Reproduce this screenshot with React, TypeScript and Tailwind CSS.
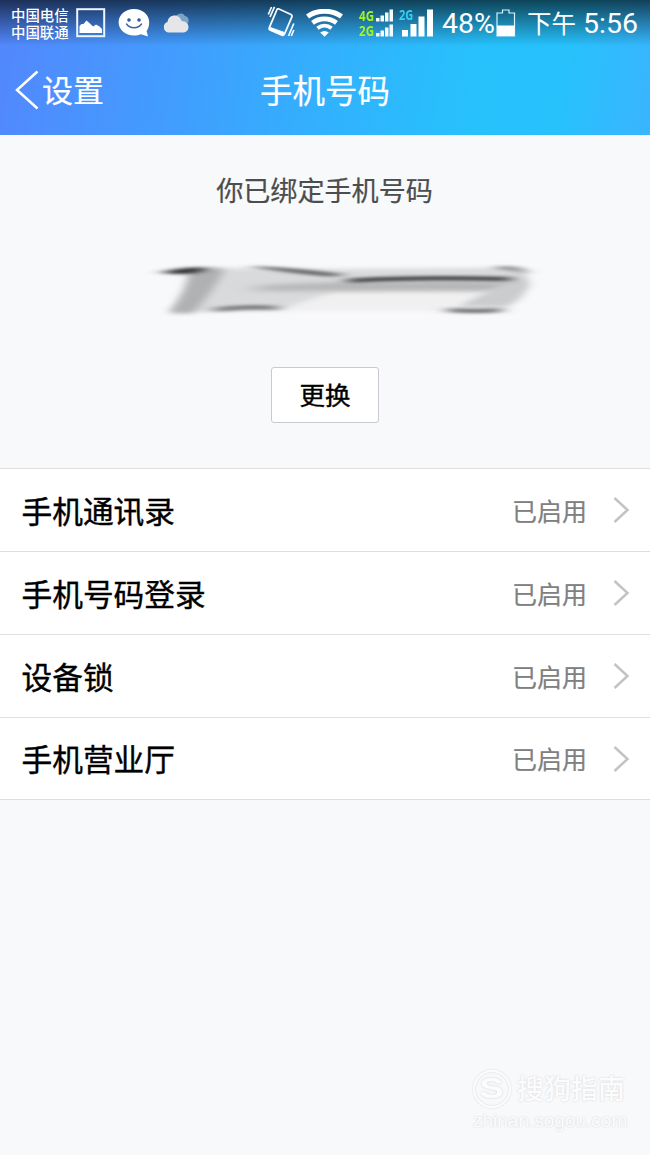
import * as React from "react";

interface ISettingItem {
  name: string;
  status: string;
}

const items: ISettingItem[] = [
  { name: "手机通讯录", status: "已启用" },
  { name: "手机号码登录", status: "已启用" },
  { name: "设备锁", status: "已启用" },
  { name: "手机营业厅", status: "已启用" },
];

function IcPicture() {
  return (
    <svg className="w-[30px] h-[30px] shrink-0" viewBox="0 0 30 30" fill="none">
      <rect x="1.2" y="1.2" width="27" height="27" stroke="#eef6ff" strokeWidth="2" />
      <path d="M3.500 25v-7l2-2h2l3-3.500 3.500 3 3 3 3-2 3.500 2 2.500 2.500V25z" fill="#fff" />
    </svg>
  );
}

function IcSmile() {
  return (
    <svg className="w-[32px] h-[30px] shrink-0" viewBox="0 0 32 30" fill="none">
      <path d="M16 1C7.500 1 .6 6.800.6 14.200S7.500 27.500 16 27.500c2.600 0 5-.5 7-1.300l7 2.300-1.400-5.500c1.700-2.400 2.600-5.500 2.600-8.800C31.200 6.800 24.500 1 16 1z" fill="#fff" />
      <circle cx="11" cy="12" r="1.800" fill="#315b9b" />
      <circle cx="21" cy="12" r="1.800" fill="#315b9b" />
      <path d="M8.500 16c3.500 5 11.500 5 15 0" stroke="#3a66a8" strokeWidth="1.400" strokeLinecap="round" />
    </svg>
  );
}

function IcCloud() {
  return (
    <svg className="w-[28px] h-[22px] shrink-0" viewBox="0 0 28 22">
      <path d="M13 8a5.500 5.500 0 0 1 10-3 4.500 4.500 0 0 1 1 8.500h-6z" fill="#7fa3c6" />
      <path d="M6 21.500a5.500 5.500 0 0 1-.5-10.500C6 6.500 9.500 4.500 12.500 4.500c3.800 0 6.300 2.500 7 5.500 4 .2 7 2.300 7 6 0 3.500-2.500 5.500-6 5.500z" fill="#e6e6e8" />
    </svg>
  );
}

function IcVibrate() {
  return (
    <svg className="w-[28px] h-[32px] shrink-0" viewBox="0 0 28 32" fill="none" stroke="#f4faff">
      <path d="M12 3 24 8.500q1.500.8 1 2.200L17.500 28q-.8 1.800-2.500 1.200L3 24q-1.400-.8-.8-2.200L9.800 4q.7-1.700 2.200-1z" strokeWidth="1.800" />
      <path d="M3.300 21.500 17.500 26.500l-1.700 3-13-5.500z" fill="#fff" strokeWidth="1" />
      <path d="M7.500.8 3 11M4.500 1 1.300 8.500M26.800 17.500 21.500 30M26.800 24l-2.500 6" strokeWidth="1.700" />
    </svg>
  );
}

function IcWifi() {
  return (
    <svg className="w-[37px] h-[28px] shrink-0" viewBox="0 0 37 28" fill="none" stroke="#fff">
      <path d="M1.500 7.500C11 .5 26 .5 35.500 7.500" strokeWidth="5" />
      <path d="M6.500 13.800c7-5.300 17-5.300 24 0" strokeWidth="4.700" />
      <path d="M11.500 19.300c4.200-3.400 9.800-3.400 14 0" strokeWidth="4" />
      <path d="M14.200 23.500q4.300-3 8.600 0l-4.300 4.300z" fill="#fff" stroke="none" />
    </svg>
  );
}

function IcSmallBars() {
  return (
    <svg className="w-[17px] h-[13px] shrink-0" viewBox="0 0 17 13" fill="#f5fbff">
      <path d="M0 9h3.500v3.500H0zM4.500 6.500H8v6H4.500zM9 3.500h3.500v9H9zM13.500.5H17v12h-3.500z" />
    </svg>
  );
}

function IcBars() {
  return (
    <svg className="w-[32px] h-[28px]" viewBox="0 0 32 28" fill="#fff">
      <path d="M0 21h6v6.500H0zM8.500 15h6v12.500h-6zM16.500 7.500h6v20h-6zM25 .5h6v27h-6z" />
    </svg>
  );
}

function IcBattery() {
  return (
    <svg className="w-[20px] h-[28px] shrink-0" viewBox="0 0 20 28" fill="none">
      <path d="M1 27V4h5.500V1h6.500v3h5.500v23z" stroke="#d8f3ff" strokeWidth="1.200" />
      <path d="M1 16.500h17.500V27H1z" fill="#fff" />
    </svg>
  );
}

function StatusBar() {
  return (
    <div className="h-[46px] pl-[11px] flex items-center text-white bg-linear-to-b from-black/65 via-black/35 via-45% to-transparent">
      <div className="w-[65px] shrink-0 text-[14.4px] leading-[17px] font-medium whitespace-nowrap">
        <p>中国电信</p>
        <p>中国联通</p>
      </div>
      <IcPicture />
      <div className="ml-[12px] flex"><IcSmile /></div>
      <div className="ml-[12px] -mt-[3px] flex"><IcCloud /></div>
      <div className="ml-[77px] -mt-[2px] flex"><IcVibrate /></div>
      <div className="ml-[11px] flex"><IcWifi /></div>
      <div className="ml-[16px] w-[34px] shrink-0 flex flex-col gap-[2px] font-['Open_Sans'] font-bold text-[14.500px] leading-[13px] text-[#a4f323]">
        <div className="flex items-center justify-between">
          <span className="w-[16px] origin-left scale-x-[0.8]">4G</span>
          <IcSmallBars />
        </div>
        <div className="flex items-center justify-between">
          <span className="w-[16px] origin-left scale-x-[0.8]">2G</span>
          <IcSmallBars />
        </div>
      </div>
      <div className="relative ml-[9px] w-[32px] shrink-0">
        <IcBars />
        <span className="absolute -left-[3px] -top-px origin-left scale-x-[0.76] font-['Open_Sans'] font-bold text-[14.500px] leading-[13px] text-[#35d0f4]">2G</span>
      </div>
      <span className="ml-[8px] mt-[2px] w-[54px] shrink-0 font-['Roboto'] text-[28.500px] leading-[32px]">48%</span>
      <IcBattery />
      <span className="ml-[11px] text-[24.500px] leading-[32px] whitespace-nowrap">下午</span>
      <span className="ml-[7px] mt-px font-['Roboto'] text-[28.500px] leading-[32px]">5:56</span>
    </div>
  );
}

function TitleBar() {
  return (
    <div className="relative h-[89px] pl-[14px] flex items-center text-white [-webkit-text-stroke:0.2px_white]">
      <svg className="w-[25px] h-[40px] -mt-[2px]" viewBox="0 0 25 40" fill="none">
        <path d="M23.500 1.500 3 20l20.500 18.500" stroke="#fff" strokeWidth="2.500" />
      </svg>
      <span className="ml-[3px] -mt-[3px] text-[31px] leading-[40px]">设置</span>
      <h1 className="absolute inset-x-0 -mt-[3px] text-center text-[32.500px] leading-[40px]">手机号码</h1>
    </div>
  );
}

// the phone number, smeared out by hand
function HiddenNumber() {
  return (
    <svg className="w-[460px] h-[80px]" viewBox="0 0 460 80" fill="none">
      <defs>
        <filter id="soft" filterUnits="userSpaceOnUse" x="0" y="-20" width="460" height="120">
          <feGaussianBlur stdDeviation="5 2" />
        </filter>
        <filter id="thin" filterUnits="userSpaceOnUse" x="0" y="-20" width="460" height="120">
          <feGaussianBlur stdDeviation="8 1.600" />
        </filter>
        <filter id="wide" filterUnits="userSpaceOnUse" x="0" y="-20" width="460" height="120">
          <feGaussianBlur stdDeviation="12 2.400" />
        </filter>
      </defs>
      <path d="M60 18H410Q422 32 408 50L380 61H60L72 30z" fill="#f0f0f1" filter="url(#soft)" />
      <path d="M80 18 200 20 408 18Q422 32 406 40L220 42 165 60 60 62 76 38z" fill="#d9dadb" filter="url(#soft)" />
      <path d="M78 19H112Q100 42 80 63H56Q74 42 78 19z" fill="#b0b1b2" filter="url(#soft)" />
      <path d="M145 36Q220 30 405 32L400 41Q280 40 140 41z" fill="#b4b5b6" filter="url(#wide)" />
      <path d="M385 36 412 30Q416 47 392 57L345 57z" fill="#cbcccd" filter="url(#soft)" />
      <path d="M50 22Q72 16 94 18Q84 27 50 23z" fill="#303030" filter="url(#thin)" />
      <path d="M140 16Q185 18 230 24L222 27Q180 24 140 17z" fill="#666768" filter="url(#thin)" />
      <path d="M235 31Q290 27 398 29" stroke="#4c4d4e" strokeWidth="4.500" filter="url(#thin)" />
      <path d="M385 18Q402 17 412 23" stroke="#858585" strokeWidth="3.500" filter="url(#thin)" />
      <path d="M102 60Q130 56 164 58" stroke="#7d7e7f" strokeWidth="4.500" filter="url(#thin)" />
      <path d="M335 60Q362 62 388 60" stroke="#777879" strokeWidth="4.500" filter="url(#thin)" />
    </svg>
  );
}

function BindInfo() {
  return (
    <section className="h-[333px] flex flex-col items-center">
      <p className="mt-[35px] -ml-px text-[27.100px] leading-[40px] text-[#4c4d4e] [-webkit-text-stroke:0.2px_#4c4d4e]">你已绑定手机号码</p>
      <div className="mt-[40px] mr-[-36px] flex"><HiddenNumber /></div>
      <button className="mt-[37px] w-[108px] h-[56px] pb-[2px] rounded-[3px] border border-[#c9cace] bg-white text-[25.500px] text-black [-webkit-text-stroke:0.4px_black]">
        更换
      </button>
    </section>
  );
}

function SettingRow({ item }: { item: ISettingItem }) {
  return (
    <li className="h-[83px] last:h-[82px] pl-[21.500px] pr-[20px] flex items-center border-b border-[#dedfe1]">
      <span className="-mt-px text-[30.700px] leading-[44px] text-black [-webkit-text-stroke:0.4px_black]">{item.name}</span>
      <span className="ml-auto -mt-px text-[25px] leading-[36px] text-[#808080] [-webkit-text-stroke:0.2px_#808080]">{item.status}</span>
      <svg className="ml-[25px] w-[18px] h-[28px]" viewBox="0 0 18 28" fill="none">
        <path d="M2.500 2 15.500 14 2.500 26" stroke="#c3c3c5" strokeWidth="2.500" />
      </svg>
    </li>
  );
}

function Watermark() {
  return (
    <div className="mt-auto mb-[22px] ml-[473px] w-[155px] text-[#fcfcfd] [text-shadow:0_0_2px_#cdcfd2]">
      <div className="flex items-center">
        <div className="size-[38px] rounded-full border-2 border-[#fcfcfd] shadow-[0_0_2px_#cdcfd2,inset_0_0_2px_#cdcfd2] grid place-items-center font-['Liberation_Sans'] font-bold text-[29px] leading-none">
          <span className="scale-x-125">S</span>
        </div>
        <span className="ml-[6px] -mt-px text-[27px] leading-[40px] font-medium whitespace-nowrap">搜狗指南</span>
      </div>
      <p className="mt-px font-['Liberation_Sans'] text-[19px] leading-[24px]">zhinan.sogou.com</p>
    </div>
  );
}

export default function App() {
  return (
    <div className="w-[650px] h-[1155px] flex flex-col overflow-hidden bg-[#f8f9fb] font-['Noto_Sans_CJK_SC',sans-serif]">
      <header className="h-[135px] shrink-0 bg-[linear-gradient(100deg,#5387fd_0%,#429cfe_27%,#31b2fd_52%,#26c2fc_74%,#27c1fc_86%,#3ab4fe_100%)]">
        <StatusBar />
        <TitleBar />
      </header>
      <BindInfo />
      <ul className="border-t border-[#dedfe1] bg-white">
        {items.map((item) => (
          <SettingRow key={item.name} item={item} />
        ))}
      </ul>
      <Watermark />
    </div>
  );
}
